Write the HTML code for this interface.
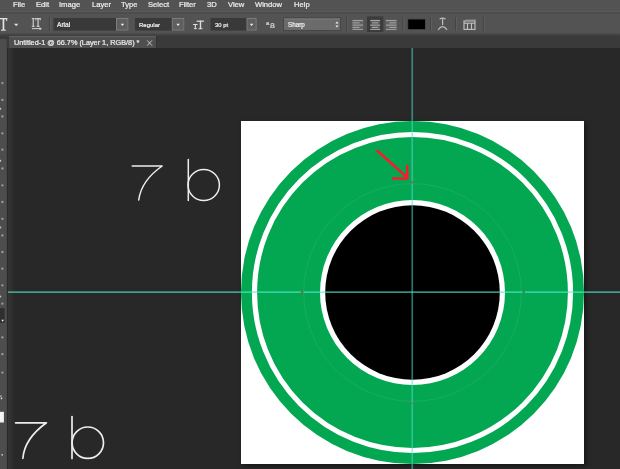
<!DOCTYPE html>
<html><head><meta charset="utf-8">
<style>
html,body{margin:0;padding:0;background:#282828;}
body{width:620px;height:469px;overflow:hidden;position:relative;font-family:"Liberation Sans",sans-serif;}
.a{position:absolute;}
.t{position:absolute;white-space:nowrap;will-change:transform;color:#ececec;line-height:1;-webkit-text-stroke:0.22px #ececec;}
</style></head><body>
<!-- canvas bg -->
<div class="a" style="left:0;top:0;width:620px;height:469px;background:#282828"></div>
<!-- left gradient near toolbar -->
<div class="a" style="left:8px;top:48px;width:7px;height:421px;background:linear-gradient(90deg,#363636,#282828)"></div>

<!-- document + shadow -->
<div class="a" style="left:241px;top:121px;width:343px;height:343px;background:#fff;box-shadow:2px 2px 5px rgba(0,0,0,.45)"></div>
<svg class="a" style="left:241px;top:121px" width="343" height="343" viewBox="0 0 343 343">
  <circle cx="171.5" cy="171.5" r="171.5" fill="#03a651"/>
  <circle cx="171.5" cy="171.5" r="158" fill="none" stroke="#fff" stroke-width="5.2"/>
  <circle cx="171.5" cy="171.5" r="108.8" fill="none" stroke="#3fc07a" stroke-width="1" opacity=".3"/>
  <circle cx="171.5" cy="171.5" r="92.5" fill="#fff"/>
  <circle cx="171.5" cy="171.5" r="87.3" fill="#000"/>
</svg>

<!-- guides -->
<svg class="a" style="left:0;top:0" width="620" height="469" viewBox="0 0 620 469">
  <rect x="8" y="291.3" width="612" height="1.7" fill="rgb(84,235,205)" fill-opacity=".62"/>
  <rect x="411.4" y="48" width="1.7" height="421" fill="rgb(78,220,208)" fill-opacity=".52"/>
</svg>
<!-- anchor points + arrow -->
<svg class="a" style="left:0;top:0" width="620" height="469" viewBox="0 0 620 469">
  <rect x="411" y="181.2" width="2.4" height="2.4" fill="#7d6a50" opacity=".85"/>
  <rect x="411" y="401.9" width="2.4" height="2.4" fill="#7d7d70" opacity=".85"/>
  <rect x="300.9" y="291" width="2.6" height="2.2" fill="#8a5a38" opacity=".85"/>
  <rect x="522.4" y="290.8" width="2.6" height="2.6" fill="#4a7a50" opacity=".85"/>
  <g stroke="#fb1a2c" stroke-width="2.6" fill="none" stroke-linecap="butt">
    <path d="M376.6 150.2 L407.5 177.6"/>
    <path d="M392 178.5 L408.3 178.5 M407.2 164.7 L407.2 179.8"/>
  </g>
  <!-- 7 b top -->
  <g stroke="#ededed" stroke-width="1.5" fill="none" stroke-linecap="round" stroke-linejoin="round">
    <path d="M132.2 166 L162.2 166 Q141.4 180.4 138.7 200"/>
    <path d="M188.3 159.6 L188.3 200.4"/>
    <ellipse cx="203.7" cy="185" rx="15.7" ry="15.5"/>
  </g>
  <!-- 7 b bottom -->
  <g stroke="#ededed" stroke-width="1.7" fill="none" stroke-linecap="round" stroke-linejoin="round">
    <path d="M15.6 422.8 L46.4 422.8 Q24.4 438.8 22.9 458.3"/>
    <path d="M72 416.5 L72 458.4"/>
    <circle cx="87.8" cy="442.7" r="15.7"/>
  </g>
</svg>

<!-- top chrome -->
<div class="a" style="left:0;top:0;width:620px;height:36px;background:#535353"></div>
<svg class="a" style="left:0;top:0" width="620" height="40" viewBox="0 0 620 40">
<defs><linearGradient id="g1" x1="0" y1="0" x2="0" y2="1"><stop offset="0" stop-color="#444"/><stop offset="1" stop-color="#535353"/></linearGradient>
<linearGradient id="g2" x1="0" y1="0" x2="0" y2="1"><stop offset="0" stop-color="#535353"/><stop offset="0.45" stop-color="#444"/><stop offset="1" stop-color="#3a3a3a"/></linearGradient></defs>
<rect x="0" y="8.6" width="620" height="1" fill="#5e5e5e"/>
<rect x="0" y="9.6" width="620" height="1" fill="#494949"/>
<rect x="0" y="10.6" width="620" height="1.8" fill="#5b5b5b"/>
<rect x="0" y="12.4" width="620" height="1.8" fill="url(#g1)"/>
<rect x="0" y="32.6" width="620" height="4.4" fill="url(#g2)"/>
</svg>
<!-- tab bar -->
<div class="a" style="left:0;top:36px;width:620px;height:12px;background:#3a3a3a"></div>
<div class="a" style="left:8.5px;top:35.6px;width:147.3px;height:12.4px;background:#4f4f4f;border-top:0.8px solid #606060;box-sizing:border-box"></div><div class="a" style="left:155.8px;top:36px;width:1.5px;height:12px;background:#333"></div>
<!-- left toolbar -->
<div class="a" style="left:0;top:39px;width:7px;height:430px;background:linear-gradient(90deg,#4d4d4d 0,#4d4d4d 5.5px,#444 7px)"></div>
<div class="a" style="left:7px;top:48px;width:1px;height:421px;background:#2a2a2a"></div>


<!-- toolbar icons -->
<svg class="a" style="left:0;top:0" width="12" height="469" viewBox="0 0 12 469">
<rect x="0" y="308.2" width="4.6" height="14.6" fill="#2e2e2e"/>
<circle cx="2.4" cy="83.1" r="1.15" fill="#a0a0a0"/><circle cx="2.4" cy="99.9" r="1.15" fill="#a0a0a0"/><circle cx="2.4" cy="116.5" r="1.15" fill="#a0a0a0"/><circle cx="2.4" cy="133.3" r="1.15" fill="#a0a0a0"/><circle cx="2.4" cy="149.7" r="1.15" fill="#a0a0a0"/><circle cx="2.4" cy="168.5" r="1.15" fill="#a0a0a0"/><circle cx="2.4" cy="185.3" r="1.15" fill="#a0a0a0"/><circle cx="2.4" cy="202" r="1.15" fill="#a0a0a0"/><circle cx="2.4" cy="218.8" r="1.15" fill="#a0a0a0"/><circle cx="2.4" cy="235.5" r="1.15" fill="#a0a0a0"/><circle cx="2.4" cy="252" r="1.15" fill="#a0a0a0"/><circle cx="2.4" cy="268.7" r="1.15" fill="#a0a0a0"/><circle cx="2.4" cy="285.3" r="1.15" fill="#a0a0a0"/><circle cx="2.4" cy="303.7" r="1.15" fill="#a0a0a0"/><circle cx="2.4" cy="337.4" r="1.15" fill="#a0a0a0"/><circle cx="2.4" cy="354.2" r="1.15" fill="#a0a0a0"/><circle cx="2.4" cy="372.6" r="1.15" fill="#a0a0a0"/><circle cx="0.3" cy="108.8" r="1" fill="#c4c4c4"/><circle cx="0.3" cy="160.8" r="1" fill="#c4c4c4"/><circle cx="0.3" cy="227.4" r="1" fill="#c4c4c4"/><circle cx="0.3" cy="296.6" r="1" fill="#c4c4c4"/>
<path d="M1.2 319.8 L4 319.8 L2.6 321.8 Z" fill="#f0f0f0"/>
<rect x="0" y="395.6" width="1.6" height="1" fill="#ddd"/><rect x="0.8" y="397.6" width="1.4" height="1.6" fill="#e8e8e8"/>
<rect x="0" y="411.8" width="3.9" height="10.7" fill="#f4f4f4"/>
<circle cx="2.2" cy="454.8" r="0.9" fill="#c8c8c8"/>
</svg>
<!-- options bar -->
<svg class="a" style="left:0;top:0" width="620" height="36" viewBox="0 0 620 36">
  <!-- T tool icon -->
  <g fill="#e2e2e2">
    <rect x="-2" y="18" width="9.2" height="1.3"/>
    <rect x="6.2" y="18" width="1" height="3"/>
    <rect x="2.6" y="18" width="1.7" height="12.2"/>
    <rect x="1" y="29.6" width="4.8" height="1.1"/>
  </g>
  <path d="M14 23.8 L18.4 23.8 L16.2 26.2 Z" fill="#d8d8d8"/>
  <!-- IT orientation icon -->
  <g fill="#dedede">
    <rect x="31.8" y="18.2" width="2.8" height="0.9"/><rect x="32.7" y="18.2" width="1" height="8.4"/><rect x="31.8" y="25.8" width="2.8" height="0.9"/>
    <rect x="35.4" y="18.2" width="5.2" height="1"/><rect x="35.4" y="18.2" width="0.8" height="2.2"/><rect x="39.8" y="18.2" width="0.8" height="2.2"/><rect x="37.5" y="18.2" width="1.1" height="8.4"/><rect x="36.6" y="25.8" width="3" height="0.9"/>
    <rect x="32" y="28.2" width="8.5" height="0.9"/>
    <path d="M39.6 27.2 L41.8 28.7 L39.6 30.2 Z"/>
  </g>
  <rect x="49" y="17" width="1" height="14" fill="#444"/><rect x="50" y="17" width="1" height="14" fill="#5e5e5e"/>
  <!-- font field -->
  <rect x="53.5" y="18" width="75" height="12.6" fill="#393939"/>
  <rect x="116.5" y="18.5" width="11.5" height="11.6" fill="#5f5f5f" stroke="#7c7c7c" stroke-width="1"/>
  <path d="M120.7 23.8 L124.1 23.8 L122.4 26 Z" fill="#f0f0f0"/>
  <!-- style field -->
  <rect x="135" y="18" width="49.4" height="12.6" fill="#393939"/>
  <rect x="172.3" y="18.5" width="11.6" height="11.6" fill="#5f5f5f" stroke="#7c7c7c" stroke-width="1"/>
  <path d="M176.4 23.8 L179.8 23.8 L178.1 26 Z" fill="#f0f0f0"/>
  <!-- tT size icon -->
  <g fill="#dcdcdc">
    <rect x="196.6" y="20.6" width="7.4" height="1.2"/><rect x="199.8" y="20.6" width="1.4" height="8.4"/><rect x="198.6" y="28.2" width="3.8" height="1"/>
    <rect x="193" y="24" width="4.6" height="1"/><rect x="194.8" y="24" width="1.1" height="5"/><rect x="193.9" y="28.2" width="2.9" height="0.9"/>
  </g>
  <rect x="208.3" y="18" width="1" height="13" fill="#5a4e46"/>
  <!-- size field -->
  <rect x="210.5" y="18" width="46.2" height="12.6" fill="#393939"/>
  <rect x="247" y="18.5" width="9.2" height="11.6" fill="#5f5f5f" stroke="#7c7c7c" stroke-width="1"/>
  <path d="M249.9 23.8 L253.3 23.8 L251.6 26 Z" fill="#f0f0f0"/>
  <!-- sharp dropdown -->
  <rect x="283.5" y="17.8" width="57" height="12.8" fill="#6b6b6b" stroke="#454545" stroke-width="1"/>
  <rect x="284.3" y="18.5" width="55.4" height="1" fill="#7a7a7a"/>
  <path d="M335.4 23.6 L338.6 23.6 L337 21.6 Z M335.4 25.4 L338.6 25.4 L337 27.4 Z" fill="#f0f0f0"/>
  <rect x="346" y="17" width="1" height="14" fill="#444"/><rect x="347" y="17" width="1" height="14" fill="#5e5e5e"/>
  <!-- align icons -->
  <rect x="352.3" y="19.6" width="11" height="10.4" fill="#636363"/>
  <g fill="#a2a2a2">
    <rect x="352.5" y="20" width="10.5" height="1.1"/><rect x="352.5" y="22.3" width="7" height="1.1"/><rect x="352.5" y="24.6" width="10.5" height="1.1"/><rect x="352.5" y="26.9" width="7" height="1.1"/><rect x="352.5" y="29" width="10.5" height="0.9"/>
  </g>
  <rect x="367" y="16.4" width="16.3" height="15.6" fill="#3b3b3b"/>
  <rect x="370.3" y="19.6" width="9.8" height="10.4" fill="#565656"/>
  <g fill="#a8a8a8">
    <rect x="370.3" y="20" width="9.8" height="1.1"/><rect x="372" y="22.3" width="6.4" height="1.1"/><rect x="370.3" y="24.6" width="9.8" height="1.1"/><rect x="372" y="26.9" width="6.4" height="1.1"/><rect x="370.3" y="29" width="9.8" height="0.9"/>
  </g>
  <rect x="385.6" y="19.6" width="11" height="10.4" fill="#636363"/>
  <g fill="#a2a2a2">
    <rect x="386" y="20" width="10.5" height="1.1"/><rect x="389.5" y="22.3" width="7" height="1.1"/><rect x="386" y="24.6" width="10.5" height="1.1"/><rect x="389.5" y="26.9" width="7" height="1.1"/><rect x="386" y="29" width="10.5" height="0.9"/>
  </g>
  <rect x="402.5" y="17" width="1" height="14" fill="#444"/><rect x="403.5" y="17" width="1" height="14" fill="#5e5e5e"/>
  <!-- color swatch -->
  <rect x="407.3" y="18.6" width="18.6" height="11.4" fill="#484848"/>
  <rect x="408.2" y="19.5" width="16.8" height="9.6" fill="#000"/>
  <rect x="430" y="17" width="1" height="14" fill="#444"/><rect x="431" y="17" width="1" height="14" fill="#5e5e5e"/>
  <!-- warp text icon -->
  <g fill="none" stroke="#bcbcbc" stroke-width="1.2">
    <path d="M439.6 19 Q442.5 17.2 445.6 19"/>
    <path d="M442.6 18.6 L442.6 25"/>
    <path d="M438.2 29.8 Q442.5 23.6 447 29.8"/>
  </g>
  <rect x="455" y="17" width="1" height="14" fill="#444"/><rect x="456" y="17" width="1" height="14" fill="#5e5e5e"/>
  <!-- panel icon -->
  <g fill="none" stroke="#c2c2c2" stroke-width="1.1">
    <rect x="464" y="21" width="11" height="8.4"/>
    <path d="M464 23.2 L475 23.2"/>
    <path d="M467.5 23.2 L467.5 29.4 M471.5 23.2 L471.5 29.4"/>
  </g>
  <rect x="465.5" y="19.6" width="10.5" height="1" fill="#9a9a9a"/>
  <rect x="483" y="17" width="1" height="14" fill="#444"/><rect x="484" y="17" width="1" height="14" fill="#5e5e5e"/>
</svg>
<div class="t" id="o1" style="left:57.4px;top:21.6px;font-size:6.6px;color:#f0f0f0">Arial</div>
<div class="t" id="o2" style="left:138.8px;top:22px;font-size:6px;color:#f0f0f0">Regular</div>
<div class="t" id="o3" style="left:214.5px;top:22.7px;font-size:5.9px;color:#f0f0f0">30 pt</div>
<div class="t" id="o4" style="left:288px;top:21.9px;font-size:6.3px;color:#f4f4f4">Sharp</div>
<div class="t" style="left:266px;top:19.8px;font-size:6px;color:#b0b0b0">a</div>
<div class="t" style="left:270px;top:20.6px;font-size:8.6px;color:#b8b8b8">a</div>

<!-- menu -->
<div class="t" id="m1" style="left:13.4px;top:0.5px;font-size:7.6px">File</div>
<div class="t" id="m2" style="left:35.6px;top:0.5px;font-size:7.6px">Edit</div>
<div class="t" id="m3" style="left:58.8px;top:0.5px;font-size:7.6px">Image</div>
<div class="t" id="m4" style="left:91.6px;top:0.5px;font-size:7.6px">Layer</div>
<div class="t" id="m5" style="left:120.8px;top:0.5px;font-size:7.6px">Type</div>
<div class="t" id="m6" style="left:147.6px;top:0.5px;font-size:7.6px">Select</div>
<div class="t" id="m7" style="left:179.4px;top:0.5px;font-size:7.6px">Filter</div>
<div class="t" id="m8" style="left:206.5px;top:0.5px;font-size:7.6px">3D</div>
<div class="t" id="m9" style="left:227.6px;top:0.5px;font-size:7.6px">View</div>
<div class="t" id="m10" style="left:255px;top:0.5px;font-size:7.6px">Window</div>
<div class="t" id="m11" style="left:294.2px;top:0.5px;font-size:7.6px">Help</div>

<!-- tab text -->
<div class="t" id="tab" style="left:14.2px;top:39.2px;font-size:7.3px;color:#ececec">Untitled-1 @ 66.7% (Layer 1, RGB/8) *</div>
<svg class="a" style="left:0;top:0" width="620" height="60"><path d="M147.2 40.4 L152 45.6 M152 40.4 L147.2 45.6" stroke="#cfcfcf" stroke-width="0.9" fill="none"/></svg>
</body></html>
